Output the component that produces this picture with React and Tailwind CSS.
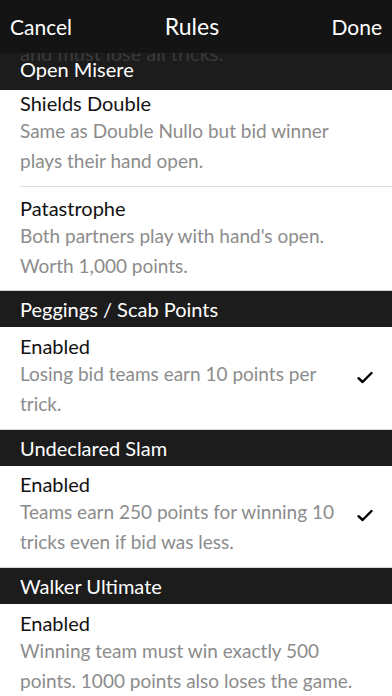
import React from 'react';

const Check = () => (
  <svg width="16" height="13" viewBox="0 0 16 13" className="shrink-0">
    <path d="M1.5 7.2 L5.6 11 L14.5 2" fill="none" stroke="#000" strokeWidth="2.4" strokeLinecap="round" strokeLinejoin="round" />
  </svg>
);

const SectionHeader = ({ title }) => (
  <div className="h-[37px] bg-[#1c1c1c] border-t border-[#d6d6d6] flex items-center px-5 text-white text-[20px] leading-none">
    {title}
  </div>
);

const RuleRow = ({ title, lines, checked, pt = 'pt-[6px]' }) => (
  <div className={`${pt} pb-[10px] pl-5 flex items-center`}>
    <div className="flex-1">
      <div className="text-[20px] leading-[26px] text-[#111]">{title}</div>
      <div className="text-[19px] leading-[30px] text-[#8c8c8c]">
        {lines.map((l, i) => (
          <div key={i}>{l}</div>
        ))}
      </div>
    </div>
    {checked && (
      <div className="w-[56px] flex justify-center pt-[2px] pl-[2px]">
        <Check />
      </div>
    )}
  </div>
);

export default function App() {
  return (
    <div className="w-[392px] h-[696px] overflow-hidden bg-white font-['Lato',sans-serif]">
      {/* Nav bar */}
      <div className="h-[53px] bg-[#141414] flex items-center px-[10px] text-white text-[21px]">
        <span className="flex-1">Cancel</span>
        <span className="text-[23px] pr-[8px]">Rules</span>
        <span className="flex-1 text-right">Done</span>
      </div>

      {/* Sticky header over scrolled content */}
      <div className="h-[37px] bg-[#1c1c1c] overflow-hidden px-5 text-[20px] leading-none">
        <div className="-mt-[10px] h-[16px] text-[#3a3a3a]">and must lose all tricks.</div>
        <div className="text-white">Open Misere</div>
      </div>

      <div className="border-b border-[#dcdcdc] ml-5 pb-[10px]">
        <div className="text-[20px] leading-[26px] text-[#111]">Shields Double</div>
        <div className="text-[19px] leading-[30px] text-[#8c8c8c]">
          <div>Same as Double Nullo but bid winner</div>
          <div>plays their hand open.</div>
        </div>
      </div>
      <div className="pl-5 pt-[8px] pb-[9px]">
        <div className="text-[20px] leading-[26px] text-[#111]">Patastrophe</div>
        <div className="text-[19px] leading-[30px] text-[#8c8c8c]">
          <div>Both partners play with hand's open.</div>
          <div>Worth 1,000 points.</div>
        </div>
      </div>

      <SectionHeader title="Peggings / Scab Points" />
      <RuleRow title="Enabled" lines={['Losing bid teams earn 10 points per', 'trick.']} checked />

      <SectionHeader title="Undeclared Slam" />
      <RuleRow title="Enabled" lines={['Teams earn 250 points for winning 10', 'tricks even if bid was less.']} checked pt="pt-[5px]" />

      <SectionHeader title="Walker Ultimate" />
      <RuleRow title="Enabled" lines={['Winning team must win exactly 500', 'points. 1000 points also loses the game.']} />
    </div>
  );
}
